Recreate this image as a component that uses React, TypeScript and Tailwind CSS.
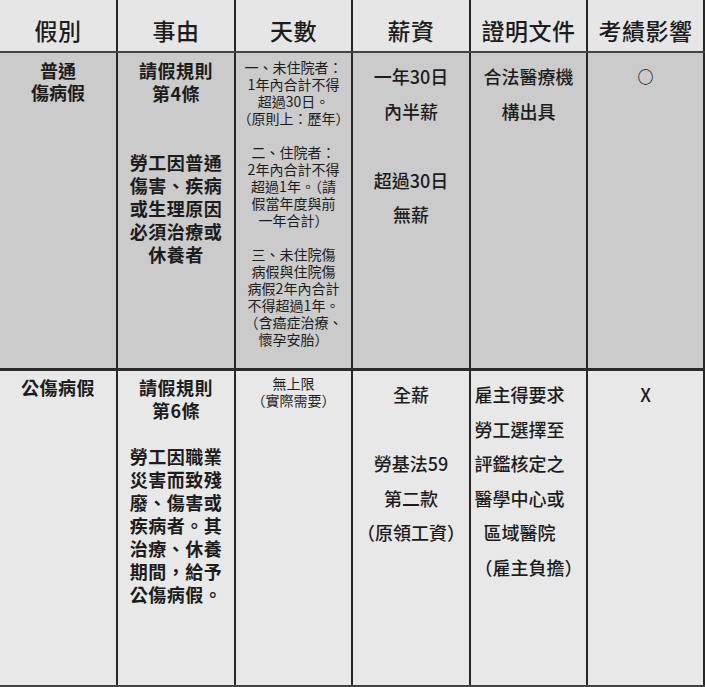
const font = { fontFamily: '"Noto Sans CJK TC", "Noto Sans", sans-serif' }

const headers = ['假別', '事由', '天數', '薪資', '證明文件', '考績影響']

const widths = ['w-[118px]', 'w-[118px]', 'w-[117px]', 'w-[118px]', 'w-[117px]', 'w-[117px]']

function Lines({ lines, className }: { lines: string[]; className?: string }) {
  return (
    <div className={className}>
      {lines.map((l, i) => (
        <div key={i} className="whitespace-nowrap">
          {l === '' ? '\u00a0' : l}
        </div>
      ))}
    </div>
  )
}

function Cell({ col, children }: { col: number; children?: React.ReactNode }) {
  return (
    <div className={`${widths[col]} shrink-0 border-r-2 border-[#262626] text-center text-[#1c1c1c]`}>
      {children}
    </div>
  )
}

export default function App() {
  return (
    <div className="w-[705px] h-[687px] bg-white overflow-hidden" style={font}>
      {/* header */}
      <div className="flex h-[53px] bg-[#e6e6e6] border-b-2 border-[#444]">
        {headers.map((h, i) => (
          <Cell key={h} col={i}>
            <div className="pt-[15px] text-[23px] leading-[30px] font-medium tracking-[0.5px]">{h}</div>
          </Cell>
        ))}
      </div>

      {/* 普通傷病假 */}
      <div className="flex h-[318px] bg-[#cbcbcb] border-b-[3px] border-[#2a2a2a]">
        <Cell col={0}>
          <Lines className="pt-[6px] text-[18px] leading-[22px] font-bold" lines={['普通', '傷病假']} />
        </Cell>
        <Cell col={1}>
          <Lines
            className="pt-[6px] text-[18px] leading-[23px] font-bold tracking-[0.5px]"
            lines={['請假規則', '第4條', '', '', '勞工因普通', '傷害、疾病', '或生理原因', '必須治療或', '休養者']}
          />
        </Cell>
        <Cell col={2}>
          <Lines
            className="pt-[6px] text-[14px] leading-[17px]"
            lines={[
              '一、未住院者：',
              '1年內合計不得',
              '超過30日。',
              '（原則上：歷年）',
              '',
              '二、住院者：',
              '2年內合計不得',
              '超過1年。（請',
              '假當年度與前',
              '一年合計）',
              '',
              '三、未住院傷',
              '病假與住院傷',
              '病假2年內合計',
              '不得超過1年。',
              '（含癌症治療、',
              '懷孕安胎）',
            ]}
          />
        </Cell>
        <Cell col={3}>
          <Lines
            className="pt-[6px] text-[18px] leading-[34.5px] font-medium"
            lines={['一年30日', '內半薪', '', '超過30日', '無薪']}
          />
        </Cell>
        <Cell col={4}>
          <Lines className="pt-[6px] text-[18px] leading-[34.5px] font-medium" lines={['合法醫療機', '構出具']} />
        </Cell>
        <Cell col={5}>
          <div className="pt-[6px] text-[16px] leading-[34.5px] font-bold text-[#111]">○</div>
        </Cell>
      </div>

      {/* 公傷病假 */}
      <div className="flex h-[316px] bg-[#e8e8e8] border-b-2 border-[#444]">
        <Cell col={0}>
          <Lines className="pt-[5px] text-[18px] leading-[22px] font-bold tracking-[0.5px]" lines={['公傷病假']} />
        </Cell>
        <Cell col={1}>
          <Lines
            className="pt-[5px] text-[18px] leading-[23px] font-bold tracking-[0.5px]"
            lines={['請假規則', '第6條', '', '勞工因職業', '災害而致殘', '廢、傷害或', '疾病者。其', '治療、休養', '期間，給予', '公傷病假。']}
          />
        </Cell>
        <Cell col={2}>
          <Lines className="pt-[4px] text-[14px] leading-[17px]" lines={['無上限', '（實際需要）']} />
        </Cell>
        <Cell col={3}>
          <Lines
            className="pt-[6px] text-[18px] leading-[34.5px] font-medium"
            lines={['全薪', '', '勞基法59', '第二款', '（原領工資）']}
          />
        </Cell>
        <Cell col={4}>
          <div className="pt-[6px] text-[18px] leading-[34.5px] font-medium">
            <Lines className="pr-[18px]" lines={['雇主得要求', '勞工選擇至', '評鑑核定之', '醫學中心或', '區域醫院']} />
            <div className="whitespace-nowrap">（雇主負擔）</div>
          </div>
        </Cell>
        <Cell col={5}>
          <div className="pt-[6px] text-[18px] leading-[34.5px] font-medium">X</div>
        </Cell>
      </div>
    </div>
  )
}
